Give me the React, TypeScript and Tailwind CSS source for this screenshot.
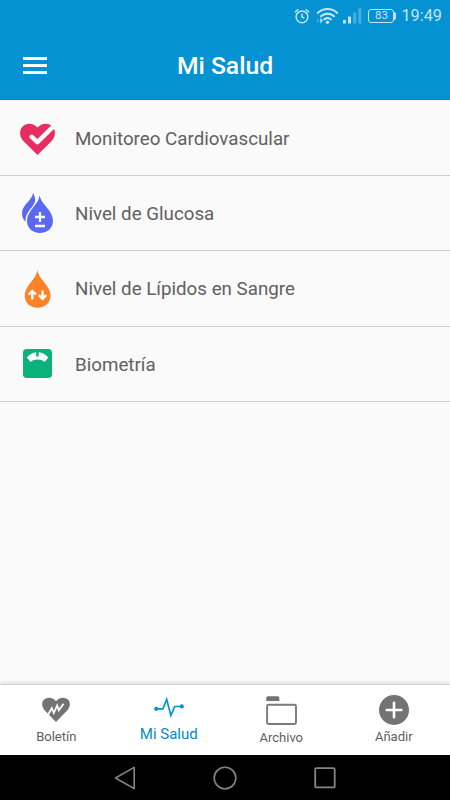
import type { ReactNode } from "react";

interface Metric {
  label: string;
  icon: ReactNode;
}

function HeartCheckIcon() {
  return (
    <svg viewBox="8 8 40 40" className="h-10 w-10 shrink-0">
      <path
        d="M27.5 45 L13.6 31.3 C8.6 26 9.2 19 13.6 15.8 C18.2 12.4 24 13.6 27.5 17.6 C31 13.6 37 12.4 41.3 15.6 C46 19.2 46.4 26 41.4 31.3 Z"
        fill="#e62f60"
      />
      <path d="M21.8 26.9 L27.4 32.2 L45 14.8" fill="none" stroke="#fafafa" strokeWidth="4.5" strokeLinecap="round" strokeLinejoin="round" />
    </svg>
  );
}

function GlucoseIcon() {
  return (
    <svg viewBox="8 8 40 40" className="h-10 w-10 shrink-0">
      <path
        d="M23 8 C22.3 15.5 12 19.5 12 28.5 C12 31.6 13.2 34.5 15.6 36.6 C14.8 26 24.8 22.5 25.2 14.8 C25 12 24 9.5 23 8 Z"
        fill="#5b69f2"
      />
      <path
        d="M29.5 10.5 C29.2 19.5 17 25 17 36 C17 43 22.6 48 30 48 C37.4 48 43 43 43 36 C43 25 31.5 20 29.5 10.5 Z"
        fill="#5b69f2"
      />
      <path d="M30 27 V37 M25 32 H35 M25 41 H35" stroke="#fafafa" strokeWidth="2.3" />
    </svg>
  );
}

function LipidsIcon() {
  return (
    <svg viewBox="8 8 40 40" className="mb-px h-10 w-10 shrink-0">
      <path
        d="M27.4 10 C26.6 19 14.7 26 14.7 35.4 C14.7 42.3 20 47.7 27.5 47.7 C35 47.7 40.6 42.3 40.6 35.4 C40.6 26 28.4 19 27.4 10 Z"
        fill="#fc8227"
      />
      <path
        d="M22.3 39.5 V31.5 M18.6 34.7 L22.3 31 L26 34.7 M32.6 30.5 V38.5 M28.9 35.2 L32.6 38.9 L36.3 35.2"
        fill="none"
        stroke="#fafafa"
        strokeWidth="2.4"
      />
    </svg>
  );
}

function ScaleIcon() {
  return (
    <svg viewBox="8 8 40 40" className="mb-[2px] h-10 w-10 shrink-0">
      <rect x="13" y="14" width="29" height="29" rx="3.8" fill="#0ab27c" />
      <path
        d="M16.8 22.6 C22.8 15.6 32.4 15.6 38.4 22.6 L34.6 27 C30.6 23.8 24.6 23.8 20.6 27 Z"
        fill="#fafafa"
      />
      <path d="M27.4 16.5 V21.5" stroke="#0ab27c" strokeWidth="2.6" />
    </svg>
  );
}

const metrics: Metric[] = [
  { label: "Monitoreo Cardiovascular", icon: <HeartCheckIcon /> },
  { label: "Nivel de Glucosa", icon: <GlucoseIcon /> },
  { label: "Nivel de Lípidos en Sangre", icon: <LipidsIcon /> },
  { label: "Biometría", icon: <ScaleIcon /> },
];

function StatusBar() {
  return (
    <div className="flex h-[31px] items-center justify-end pr-2 text-[#c3e5f5]">
      <svg width="16" height="16" viewBox="0 0 16 16" fill="none" stroke="currentColor" strokeWidth="1.5" className="mr-[5px]">
        <circle cx="8" cy="8.8" r="5.9" />
        <path d="M8 5.5 V9 L10.4 10.2 M0.9 4.2 L4.3 1.2 M15.1 4.2 L11.7 1.2" />
      </svg>
      <svg width="24" height="18" viewBox="0 0 24 18" fill="none" stroke="currentColor" strokeWidth="2" className="mr-[4px]">
        <path d="M2.2 6.5 C8 0.5 17.2 0.5 22.8 6.5 M5.3 9.8 C9.5 5.6 15.7 5.6 19.7 9.8 M8.5 12.9 C11 10.4 14 10.4 16.5 12.9" />
        <circle cx="12.5" cy="15.3" r="1.7" fill="currentColor" stroke="none" />
        <path d="M5.3 10.8 L8 13.6 L5.3 16.6 Z" fill="currentColor" stroke="none" />
        <path d="M3.8 11.8 L1.4 13.7 L3.8 15.8 Z" fill="currentColor" stroke="none" opacity="0.4" />
      </svg>
      <svg width="19" height="16" viewBox="0 0 19 16" fill="currentColor" className="mr-[6px]">
        <rect x="0" y="12" width="3" height="3.5" />
        <rect x="5" y="8.5" width="3" height="7" />
        <rect x="10.2" y="4.5" width="3" height="11" opacity="0.35" />
        <rect x="15.3" y="0.5" width="3" height="15" opacity="0.35" />
      </svg>
      <div className="mr-[5px] flex items-center">
        <span className="flex h-[14px] w-[26px] items-center justify-center rounded-[3px] border-[1.5px] border-current text-[11.5px] leading-none">
          83
        </span>
        <span className="h-[8px] w-[2px] rounded-r-sm bg-current" />
      </div>
      <span className="mt-[2px] text-[16.3px] leading-none">19:49</span>
    </div>
  );
}

function Header() {
  return (
    <header className="h-[100px] shrink-0 border-b border-[#0485ca] bg-[#0492d2]">
      <StatusBar />
      <div className="grid h-[68px] grid-cols-[1fr_auto_1fr] items-center">
        <button className="ml-[23px] flex w-6 flex-col gap-[4px]" aria-label="Menú">
          <span className="h-[3px] w-full bg-white" />
          <span className="h-[3px] w-full bg-white" />
          <span className="h-[3px] w-full bg-white" />
        </button>
        <h1 className="mt-[2px] text-[24.7px] font-medium leading-none text-white">Mi Salud</h1>
      </div>
    </header>
  );
}

function BottomTabs() {
  return (
    <nav className="grid h-[71px] shrink-0 grid-cols-4 border-t border-[#d5d5d5] bg-white text-[13px] leading-4 text-[#606060] shadow-[0_-1px_4px_rgba(0,0,0,0.14)]">
      <div className="flex flex-col items-center pt-[9px]">
        <svg width="30" height="30" viewBox="0 0 30 30">
          <path
            d="M15 28 L3.8 16.5 C-0.2 12 0.6 6.8 4.2 4.8 C8.2 2.5 12.4 3.8 15 7.2 C17.6 3.8 21.8 2.5 25.8 4.8 C29.4 6.8 30.2 12 26.2 16.5 Z"
            fill="#737373"
          />
          <path d="M7.2 20.5 L10.8 14 L12.8 19 L16.2 11.5 L17.8 16.4 L22.6 9.8" fill="none" stroke="#fff" strokeWidth="1.8" />
        </svg>
        <span className="mt-[5px]">Boletín</span>
      </div>
      <div className="flex flex-col items-center pt-[9px] text-[#0788c8]">
        <svg width="30" height="28" viewBox="0 0 30 28" fill="none" stroke="#0492d2" strokeWidth="1.7">
          <path d="M2 14.8 H8.9 L12.7 5.5 L16.9 21.4 L20.7 12.5 H28" />
          <circle cx="2.2" cy="14.8" r="2.1" fill="#0492d2" stroke="none" />
          <circle cx="27.8" cy="12.4" r="2.1" fill="#0492d2" stroke="none" />
        </svg>
        <span className="mt-[3px] text-[15px] leading-[18px]">Mi Salud</span>
      </div>
      <div className="flex flex-col items-center pt-[9px]">
        <svg width="31" height="32" viewBox="0 0 31 32">
          <path d="M0.2 7 V4 Q0.2 2.3 1.9 2.3 H11.8 Q13.3 2.3 13.3 4 V7 Z" fill="#737373" />
          <rect x="1.1" y="10.8" width="28.9" height="19.2" rx="1.5" fill="#fff" stroke="#7b7b7b" strokeWidth="1.9" />
        </svg>
        <span className="mt-[4px]">Archivo</span>
      </div>
      <div className="flex flex-col items-center pt-[10px]">
        <svg width="30" height="30" viewBox="0 0 30 30">
          <circle cx="15" cy="15" r="15" fill="#737373" />
          <path d="M15 7.7 V22.3 M7.7 15 H22.3" stroke="#fff" strokeWidth="2.6" strokeLinecap="round" />
        </svg>
        <span className="mt-[4px]">Añadir</span>
      </div>
    </nav>
  );
}

function SystemNav() {
  return (
    <div className="flex h-[45px] shrink-0 items-center justify-center gap-[76px] bg-black">
      <svg width="24" height="24" viewBox="0 0 24 24" fill="none" stroke="#858585" strokeWidth="1.6" strokeLinejoin="round">
        <path d="M2.5 12 L21.2 1.4 V22.6 Z" />
      </svg>
      <svg width="24" height="24" viewBox="0 0 24 24" fill="none" stroke="#858585" strokeWidth="1.6">
        <circle cx="12" cy="12" r="10.8" />
      </svg>
      <svg width="24" height="24" viewBox="0 0 24 24" fill="none" stroke="#858585" strokeWidth="1.8">
        <rect x="2.2" y="2.2" width="19.5" height="19.2" rx="1" />
      </svg>
    </div>
  );
}

export default function App() {
  return (
    <div className="flex h-[800px] w-[450px] flex-col overflow-hidden bg-[#fafafa] font-['Roboto',sans-serif]">
      <Header />
      <main className="flex-1 pt-[0.6px]">
        {metrics.map((metric) => (
          <div
            key={metric.label}
            className="flex h-[75.4px] items-center border-b border-[#cecece] pl-[18px]"
          >
            {metric.icon}
            <span className="mt-[1.5px] ml-[17px] text-[18.75px] leading-6 text-[#616161]">{metric.label}</span>
          </div>
        ))}
      </main>
      <BottomTabs />
      <SystemNav />
    </div>
  );
}
